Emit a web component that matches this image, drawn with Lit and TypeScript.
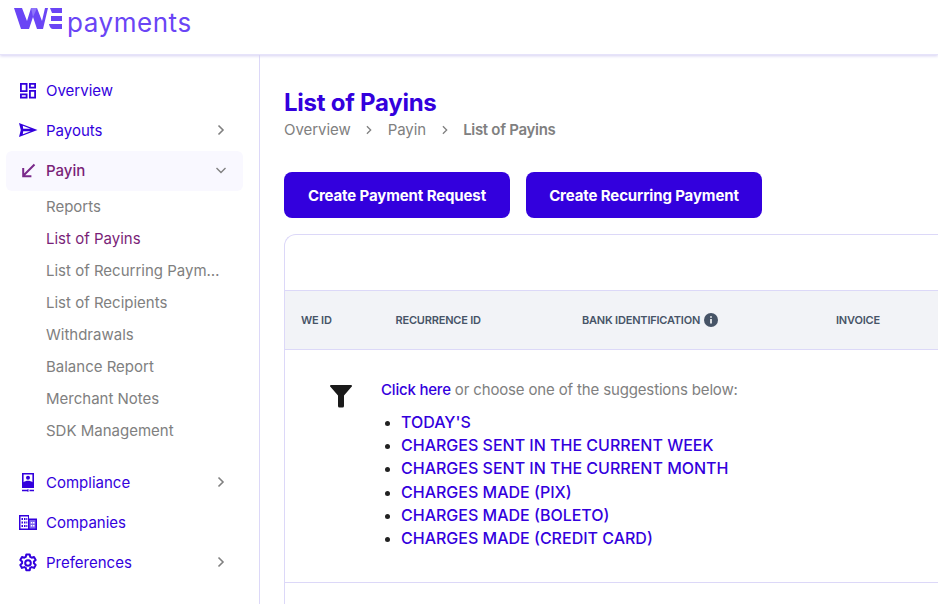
import { LitElement, html, css, svg } from "lit";
import { customElement } from "lit/decorators.js";

const chevR = html`<svg class="chev" viewBox="0 0 12 12"><path d="M3.500 1.500 8 6 3.500 10.500" fill="none" stroke="#808080" stroke-width="1.600"/></svg>`;
const chevD = html`<svg class="chev" viewBox="0 0 12 12"><path d="M1.500 4 6 8.500 10.500 4" fill="none" stroke="#808080" stroke-width="1.400"/></svg>`;

const icons: Record<string, unknown> = {
  overview: svg`<path fill-rule="evenodd" d="M1 3h7.500v9H1zM2.800 4.800v5.400h3.900V4.800zM10 3h7v5.500h-7zM11.800 4.800v1.900h3.400V4.800zM10 10h7v8.500h-7zM11.800 11.800v4.900h3.400v-4.900zM1 13.500h7.500v5H1zM2.800 15.300v1.400h3.900v-1.400z" fill="#3300dd"/>`,
  payouts: svg`<path fill-rule="evenodd" d="M0 3 18.500 10 0 17 1.800 10zM3.800 5.800 4.200 8.800h7.500zM4.200 11.200l-.4 3 7.900-3z" fill="#3300dd"/>`,
  payin: svg`<path d="M15.500 4.500 4.500 15.500M4.200 8v8.200h8.200" fill="none" stroke="#7a2a8a" stroke-width="2"/>`,
  compliance: svg`<path fill-rule="evenodd" d="M3 1h12v15H3zM9 3.800a2 2 0 1 0 0 4 2 2 0 0 0 0-4zM4.600 2.600v7.600c1-1 2.600-1.500 4.400-1.500s3.400.5 4.400 1.500V2.600z" fill="#3300dd"/><path d="M3 18.500h6M10.500 18.500h4.500" stroke="#3300dd" stroke-width="1.300"/><path d="M9 17.200v2.600" stroke="#3300dd" stroke-width="1"/>`,
  companies: svg`<path fill="#7f66ee" d="M10 7h8v11h-8z"/><path fill-rule="evenodd" d="M0 3h10v3.500h8V18H0zM1.500 4.500v12h7.500v-12zM10.500 8v8.500h6V8z" fill="#3300dd"/><path fill="#3300dd" d="M2.500 6h1.500v2H2.500zM5 6h1.500v2H5zM7.300 6h1v2h-1zM2.500 9.500h1.500v2H2.500zM5 9.500h1.500v2H5zM7.300 9.500h1v2h-1zM2.500 13h1.500v2H2.500zM5 13h1.500v2H5zM7.300 13h1v2h-1z"/><path fill="#fff" d="M11.800 10h1.500v1.500h-1.500zM14 10h1.500v1.500H14zM11.800 13h1.500v1.500h-1.500zM14 13h1.500v1.500H14z"/>`,
  preferences: svg`<g transform="translate(-1 1)"><path fill="none" stroke="#3300dd" stroke-width="2" stroke-linejoin="round" d="M8.300 1.500h3.400l.5 2.400 1.500.8 2.300-.8 1.700 3-1.800 1.600v1.800l1.800 1.600-1.700 3-2.300-.8-1.500.8-.5 2.400H8.300l-.5-2.400-1.500-.8-2.300.8-1.700-3 1.800-1.600V8.500L2.300 6.900l1.700-3 2.300.8 1.500-.8z"/><circle cx="10" cy="10" r="2.800" fill="none" stroke="#3300dd" stroke-width="2"/></g>`,
};

const icon = (name: string) => html`<svg class="ico" viewBox="0 0 20 20">${icons[name]}</svg>`;

@customElement("app-root")
export class AppRoot extends LitElement {
  static styles = css`
    :host { display: block; width: 938px; height: 604px; overflow: hidden; background: #fff; font-family: Inter, "Liberation Sans", sans-serif; color: #808080; }
    header { height: 55px; box-sizing: border-box; display: flex; align-items: flex-start; gap: 5px; padding: 7px 0 0 14px; box-shadow: 0 1px 3px #d5d0f2; border-bottom: 1px solid #e6e3fa; position: relative; }
    .we { width: 48px; height: 23px; display: block; }
    .brand { font-size: 26px; line-height: 32px; color: #6a45f5; letter-spacing: .55px; font-weight: 400; }
    .body { display: flex; height: 549px; }
    aside { width: 260px; box-sizing: border-box; border-right: 1px solid #dcd8f8; padding: 15px 16px 0 6px; flex: none; }
    .item { width: 237px; height: 40px; display: flex; align-items: center; box-sizing: border-box; padding: 0 16px 0 13px; gap: 7px; font-size: 15px; color: #3300dd; border-radius: 6px; }
    .item.on { background: #f9f8ff; color: #7a1f78; font-weight: 500; margin: 1px 0 -1px; padding-bottom: 2px; }
    .ico { width: 20px; height: 20px; flex: none; }
    .label { flex: 1; }
    .chev { width: 12px; height: 12px; flex: none; }
    .subs { display: flex; flex-direction: column; margin: 0 0 15px 40px; padding-top: 1px; }
    .sub { height: 32px; line-height: 32px; font-size: 15px; color: #808080; white-space: nowrap; overflow: hidden; text-overflow: ellipsis; width: 174px; }
    .sub.on { color: #7a1f78; }
    main { flex: 1; min-width: 0; padding: 32px 0 0 24px; }
    h1 { margin: 0; font-size: 24px; line-height: 32px; font-weight: 700; color: #3300dd; letter-spacing: -.25px; }
    .crumbs { display: flex; align-items: center; gap: 13.500px; font-size: 15px; line-height: 22px; letter-spacing: -.05px; }
    .crumbs .chev { width: 10px; height: 10px; }
    .crumbs b { font-weight: 600; letter-spacing: -.3px; }
    .btns { display: flex; gap: 16px; margin-top: 31px; }
    button { height: 46px; border: 0; border-radius: 8px; background: #3300dd; color: #fff; font: 700 15px Inter, "Liberation Sans", sans-serif; letter-spacing: -.12px; }
    .b1 { width: 226px; } .b2 { width: 236px; }
    .card { margin-top: 16px; width: 700px; height: 420px; border: 1px solid #dcd8f8; border-right: 0; border-radius: 12px 0 0 0; box-sizing: border-box; }
    .spacer { height: 55px; }
    .thead { height: 60px; box-sizing: border-box; background: #f2f3f7; border-top: 1px solid #dcd8f8; border-bottom: 1px solid #dcd8f8; display: grid; grid-template-columns: 94.500px 186.500px 254px 1fr; align-items: center; font-size: 11px; font-weight: 600; color: #475467; letter-spacing: -.2px; }
    .thead span { padding-left: 16px; display: flex; align-items: center; gap: 4px; }
    .info { width: 14px; height: 14px; }
    .filters { display: flex; height: 233px; box-sizing: border-box; border-bottom: 1px solid #dcd8f8; padding: 29px 0 0 45px; }
    .funnel { width: 22px; height: 24px; margin: 5px 29px 0 0; flex: none; }
    .lead { font-size: 15px; line-height: 22px; margin: 0; letter-spacing: -.15px; }
    .lead a { color: #3300dd; font-weight: 500; letter-spacing: -.2px; }
    li a { color: #3300dd; font-weight: 500; font-size: 16px; letter-spacing: 0; }
    ul { margin: 10px 0 0; padding: 0 0 0 20px; color: #222; }
    li { font-size: 14px; height: 23.200px; line-height: 23.200px; }
  `;

  render() {
    return html`
      <header>
        <svg class="we" viewBox="0 0 48 23">
          <path fill="#6a45f5" d="M0 1h8l5 13 4-13h6l5 13 3-13h3l-5 21h-6l-4-12-4 12H7z"/>
          <path fill="#8f75fa" d="M17 1h6l-4 9z"/>
          <path fill="#6a45f5" d="M36 1h12v5H38zM37 9h11v5H37zM35 17h13v5H39q-3 0-4-5z"/>
        </svg>
        <span class="brand">payments</span>
      </header>
      <div class="body">
        <aside>
          <div class="item">${icon("overview")}<span class="label">Overview</span></div>
          <div class="item">${icon("payouts")}<span class="label">Payouts</span>${chevR}</div>
          <div class="item on">${icon("payin")}<span class="label">Payin</span>${chevD}</div>
          <div class="subs">
            <div class="sub">Reports</div>
            <div class="sub on">List of Payins</div>
            <div class="sub">List of Recurring Payments</div>
            <div class="sub">List of Recipients</div>
            <div class="sub">Withdrawals</div>
            <div class="sub">Balance Report</div>
            <div class="sub">Merchant Notes</div>
            <div class="sub">SDK Management</div>
          </div>
          <div class="item">${icon("compliance")}<span class="label">Compliance</span>${chevR}</div>
          <div class="item">${icon("companies")}<span class="label">Companies</span></div>
          <div class="item">${icon("preferences")}<span class="label">Preferences</span>${chevR}</div>
        </aside>
        <main>
          <h1>List of Payins</h1>
          <div class="crumbs"><span>Overview</span>${chevR}<span>Payin</span>${chevR}<b>List of Payins</b></div>
          <div class="btns">
            <button class="b1">Create Payment Request</button>
            <button class="b2">Create Recurring Payment</button>
          </div>
          <div class="card">
            <div class="spacer"></div>
            <div class="thead">
              <span>WE ID</span>
              <span>RECURRENCE ID</span>
              <span>BANK IDENTIFICATION
                <svg class="info" viewBox="0 0 14 14"><circle cx="7" cy="7" r="7" fill="#475467"/><path d="M7 6v4.500M7 3.200v1.600" stroke="#fff" stroke-width="1.600"/></svg>
              </span>
              <span>INVOICE</span>
            </div>
            <div class="filters">
              <svg class="funnel" viewBox="0 0 22 24"><path fill="#1a1a1a" d="M1 1h20a1 1 0 0 1 .8 1.600L14 11.500V22a1.500 1.500 0 0 1-1.500 1.500h-3A1.500 1.500 0 0 1 8 22V11.500L.2 2.600A1 1 0 0 1 1 1z"/></svg>
              <div>
                <p class="lead"><a>Click here</a> or choose one of the suggestions below:</p>
                <ul>
                  <li><a>TODAY'S</a></li>
                  <li><a>CHARGES SENT IN THE CURRENT WEEK</a></li>
                  <li><a>CHARGES SENT IN THE CURRENT MONTH</a></li>
                  <li><a>CHARGES MADE (PIX)</a></li>
                  <li><a>CHARGES MADE (BOLETO)</a></li>
                  <li><a>CHARGES MADE (CREDIT CARD)</a></li>
                </ul>
              </div>
            </div>
          </div>
        </main>
      </div>
    `;
  }
}
